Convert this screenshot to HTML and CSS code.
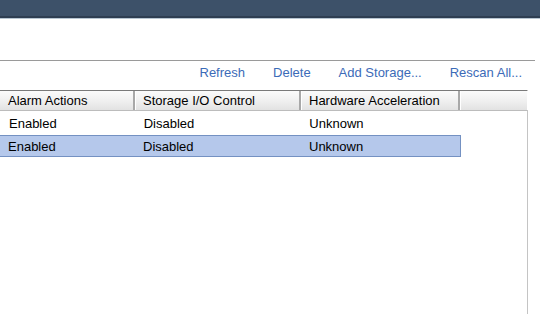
FILE: index.html
```html
<!DOCTYPE html>
<html lang="en">

<head>
    <meta charset="UTF-8">
    <title>Storage</title>
    <link rel="stylesheet" href="styles.css">
</head>

<body>
    <div class="titlebar"></div>
    <div class="panel">
        <div class="toolbar">
            <a class="action" href="#">Refresh</a>
            <a class="action" href="#">Delete</a>
            <a class="action" href="#">Add Storage...</a>
            <a class="action" href="#">Rescan All...</a>
        </div>
        <div class="grid">
            <div class="grid-head">
                <div class="col col-1">Alarm Actions</div>
                <div class="col col-2">Storage I/O Control</div>
                <div class="col col-3">Hardware Acceleration</div>
                <div class="col col-4"></div>
            </div>
            <div class="grid-row">
                <div class="col col-1">Enabled</div>
                <div class="col col-2">Disabled</div>
                <div class="col col-3">Unknown</div>
            </div>
            <div class="grid-row selected">
                <div class="col col-1">Enabled</div>
                <div class="col col-2">Disabled</div>
                <div class="col col-3">Unknown</div>
            </div>
        </div>
    </div>
</body>

</html>
```

FILE: styles.css
```css
body {
    margin: 0;
    padding: 0;
    background: #ffffff;
    font-family: "Liberation Sans", Arial, sans-serif;
    font-size: 13px;
    color: #000;
    overflow: hidden;
    height: 314px;
}

.titlebar {
    height: 16px;
    background: #3d5169;
    border-bottom: 2px solid #2e3e52;
    box-shadow: 0 1px 0 #b8c6d2;
}

.panel {
    padding-top: 42px;
    height: 254px;
    display: flex;
    flex-direction: column;
}

.toolbar {
    width: 535px;
    border-top: 1px solid #9a9a9a;
    height: 29px;
    display: flex;
    justify-content: flex-end;
    align-items: center;
    padding-right: 13px;
    padding-bottom: 5px;
    box-sizing: border-box;
    gap: 28px;
}

.action {
    color: #3c6bb8;
    text-decoration: none;
    font-size: 13px;
}

.grid {
    flex: 1;
    width: 528px;
    border-right: 1px solid #c4c4c4;
    box-sizing: border-box;
    margin-top: 1px;
}

.grid-head {
    display: flex;
    height: 19px;
    background: linear-gradient(to bottom, #fbfbfb 0%, #eeeeee 60%, #e2e2e2 100%);
    border-top: 1px solid #7a7a7a;
    border-bottom: 1px solid #bcbcbc;
}

.grid-head .col {
    border-right: 2px solid #a8a8a8;
    box-shadow: 1px 0 0 #ffffff;
    line-height: 19px;
}

.col {
    box-sizing: border-box;
    padding-left: 8px;
    white-space: nowrap;
    font-size: 13px;
}

.col-1 {
    width: 135px;
}

.col-2 {
    width: 166px;
}

.col-3 {
    width: 159px;
}

.col-4 {
    width: 67px;
    border-right: none !important;
}

.grid-row {
    display: flex;
    width: 461px;
    height: 22px;
    align-items: center;
    box-sizing: border-box;
    border: 1px solid transparent;
    margin-top: 1px;
}

.grid-row.selected {
    background: #b5c8eb;
    border: 1px solid #7491c2;
    border-left: none;
}
```
